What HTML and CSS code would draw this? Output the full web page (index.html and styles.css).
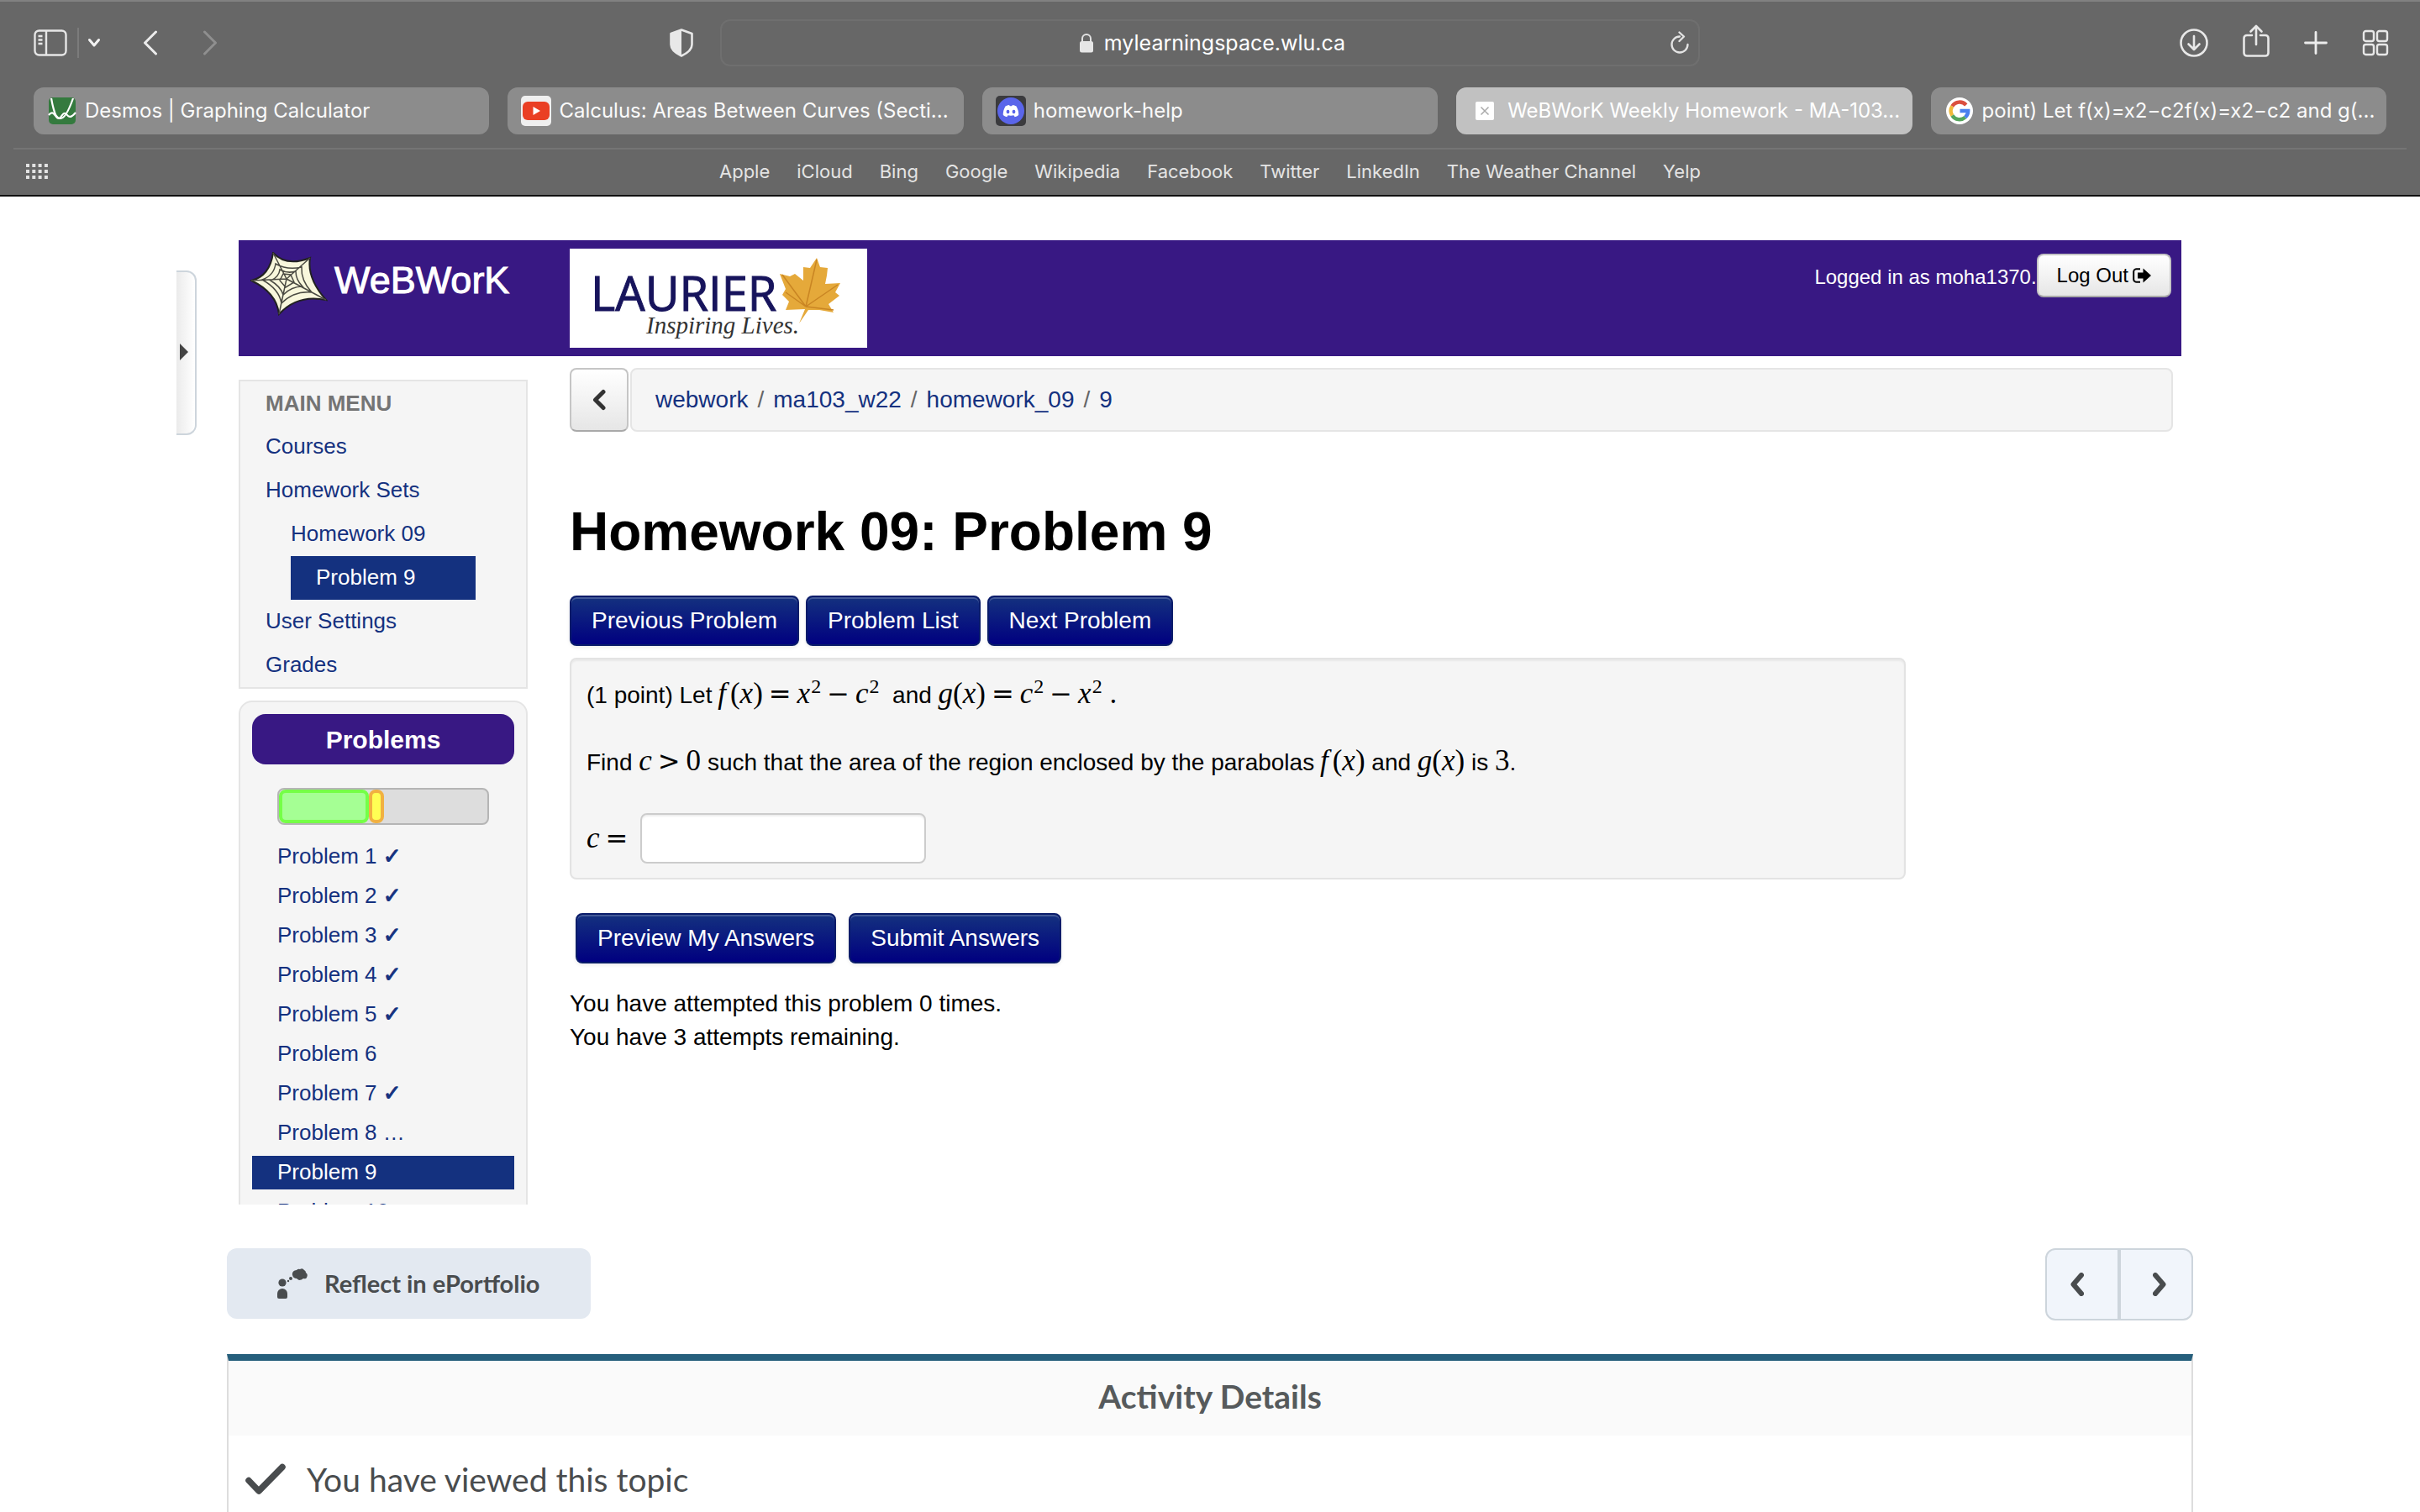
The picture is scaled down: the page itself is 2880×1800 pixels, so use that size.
FILE: index.html
```html
<!DOCTYPE html>
<html lang="en">
<head>
<meta charset="utf-8">
<title>WeBWorK Weekly Homework - MA-103</title>
<link rel="stylesheet" href="styles.css">
</head>
<body>
<header class="browser">
  <div class="toolbar">
    <div class="tools tools-left">
      <button class="tool" aria-label="Sidebar"><svg width="40" height="32" viewBox="0 0 40 32" fill="none" stroke="#e6e6e6" stroke-width="2.4"><rect x="1.5" y="1.5" width="37" height="29" rx="5"/><path d="M15 2v28M5.500 8h5M5.500 12.500h5M5.500 17h5"/></svg></button>
      <span class="tool-divider"></span>
      <button class="tool tool-menu" aria-label="Tab groups"><svg width="16" height="12" viewBox="0 0 16 12" fill="none" stroke="#f2f2f2" stroke-width="3" stroke-linecap="round" stroke-linejoin="round"><path d="M2.500 2.500 8 9l5.500-6.500"/></svg></button>
      <button class="tool tool-back" aria-label="Back"><svg width="18" height="30" viewBox="0 0 18 30" fill="none" stroke="#ececec" stroke-width="3" stroke-linecap="round" stroke-linejoin="round"><path d="M15.500 2 2.500 15l13 13"/></svg></button>
      <button class="tool tool-forward" aria-label="Forward"><svg width="18" height="30" viewBox="0 0 18 30" fill="none" stroke="#8f8f8f" stroke-width="3" stroke-linecap="round" stroke-linejoin="round"><path d="M2.500 2l13 13-13 13"/></svg></button>
    </div>
    <button class="tool tool-shield" aria-label="Privacy report"><svg width="28" height="34" viewBox="0 0 28 34"><path d="M14 1.500 26.500 6v13c0 6-6 10.500-12.500 13.500C7.500 29.500 1.500 25 1.500 19V6z" fill="none" stroke="#e8e8e8" stroke-width="2.600" stroke-linejoin="round"/><path d="M14 2v30C7.500 29 2 25 2 19V6z" fill="#e8e8e8"/></svg></button>
    <div class="address">
      <svg width="16" height="24" viewBox="0 0 16 24"><path d="M3 12V7a5 5 0 0 1 10 0v5" fill="none" stroke="#e2e2e2" stroke-width="2"/><rect y="10" width="16" height="13.500" rx="2.500" fill="#e6e6e6"/></svg>
      <span>mylearningspace.wlu.ca</span>
      <button class="tool reload" aria-label="Reload"><svg width="24" height="28" viewBox="0 0 24 28" fill="none" stroke="#e4e4e4" stroke-width="2.300" stroke-linecap="round" stroke-linejoin="round"><path d="M12 6.500a9.500 9.500 0 1 0 9.500 9.500M11.500 1.500l5.500 5-5.500 5.500"/></svg></button>
    </div>
    <div class="tools tools-right">
      <button class="tool" aria-label="Downloads"><svg width="34" height="34" viewBox="0 0 34 34" fill="none" stroke="#e8e8e8" stroke-width="2.600" stroke-linecap="round" stroke-linejoin="round"><circle cx="17" cy="17" r="15.500"/><path d="M17 9v16M10.500 18.500 17 25l6.500-6.500"/></svg></button>
      <button class="tool tool-share" aria-label="Share"><svg width="32" height="40" viewBox="0 0 32 40" fill="none" stroke="#e8e8e8" stroke-width="2.600" stroke-linecap="round" stroke-linejoin="round"><path d="M11 13H5a3.500 3.500 0 0 0-3.500 3.500V34A3.500 3.500 0 0 0 5 37.500h22a3.500 3.500 0 0 0 3.500-3.500V16.500A3.500 3.500 0 0 0 27 13h-6M16 24V2M9.500 8.500 16 2l6.500 6.500"/></svg></button>
      <button class="tool" aria-label="New tab"><svg width="28" height="28" viewBox="0 0 28 28" stroke="#ececec" stroke-width="2.800" stroke-linecap="round"><path d="M14 1.500v25M1.500 14h25"/></svg></button>
      <button class="tool" aria-label="Tab overview"><svg width="32" height="32" viewBox="0 0 32 32" fill="none" stroke="#e8e8e8" stroke-width="2.400"><rect x="2" y="2" width="12" height="12" rx="2.500"/><rect x="18" y="2" width="12" height="12" rx="2.500"/><rect x="2" y="18" width="12" height="12" rx="2.500"/><rect x="18" y="18" width="12" height="12" rx="2.500"/></svg></button>
    </div>
  </div>
  <nav class="tabs" aria-label="Tabs">
    <a class="tab" href="#"><svg width="36" height="36" viewBox="0 0 36 36"><rect x="2" y="2" width="32" height="32" rx="5" fill="#347a3e"/><path d="M5 3c4 22 7 24 11 24S25 20 31 3M2 23c4-5 6-2 9 2s5 1 7-2 4-3 6 0 5 3 10-3" fill="none" stroke="#fff" stroke-width="2.200"/></svg><span>Desmos | Graphing Calculator</span></a>
    <a class="tab" href="#"><svg width="36" height="36" viewBox="0 0 36 36"><rect width="36" height="36" rx="5" fill="#efefef"/><rect x="2" y="7" width="32" height="22" rx="6" fill="#ea3f24"/><path d="M14.500 13v10l8.500-5z" fill="#fff"/></svg><span>Calculus: Areas Between Curves (Secti...</span></a>
    <a class="tab" href="#"><svg width="36" height="36" viewBox="0 0 36 36"><rect width="36" height="36" rx="5" fill="#3b3b3e"/><circle cx="18" cy="18" r="16" fill="#5a65ea"/><path d="M11.500 12.500c1.500-1 3-1.500 4.500-1.500l.8 1.300h2.400L20 11c1.500 0 3 .5 4.500 1.500 2 3.500 3 7 2.700 10.500-1.500 1.200-3 2-4.500 2.300l-1.200-2c-2.300.6-4.700.6-7 0l-1.200 2C11.800 25 10.300 24.200 8.800 23c-.3-3.500.7-7 2.700-10.500z" fill="#fff"/><ellipse cx="14.500" cy="19" rx="1.900" ry="2.200" fill="#5a65ea"/><ellipse cx="21.500" cy="19" rx="1.900" ry="2.200" fill="#5a65ea"/></svg><span>homework-help</span></a>
    <a class="tab tab-active" href="#"><svg width="36" height="36" viewBox="0 0 36 36"><rect x="7" y="7" width="22" height="22" rx="2" fill="#fff"/><path d="M13.500 13.500l9 9M22.500 13.500l-9 9" stroke="#aaa" stroke-width="1.500"/></svg><span>WeBWorK Weekly Homework - MA-103...</span></a>
    <a class="tab" href="#"><svg width="36" height="36" viewBox="0 0 36 36"><circle cx="18" cy="18" r="16" fill="#fff"/><g fill="none" stroke-width="4.400"><path d="M25.800 11A10.300 10.300 0 0 0 9.300 12.500" stroke="#db4f3f"/><path d="M9.300 12.500a10.300 10.300 0 0 0 0 11" stroke="#f0b93a"/><path d="M9.300 23.500a10.300 10.300 0 0 0 15.500 2.200" stroke="#55a55c"/><path d="M24.800 25.700A10.300 10.300 0 0 0 28.200 18H18.500" stroke="#4a80ee"/></g></svg><span>point) Let f(x)=x2−c2f(x)=x2−c2 and g(...</span></a>
  </nav>
  <nav class="bookmarks" aria-label="Favourites">
    <svg class="dots" width="26" height="18" viewBox="0 0 26 18" stroke="#e2e2e2" stroke-width="4" stroke-dasharray="4 3.300"><path d="M0 2h26M0 9h26M0 16h26"/></svg>
    <a href="#">Apple</a><a href="#">iCloud</a><a href="#">Bing</a><a href="#">Google</a><a href="#">Wikipedia</a><a href="#">Facebook</a><a href="#">Twitter</a><a href="#">LinkedIn</a><a href="#">The Weather Channel</a><a href="#">Yelp</a>
  </nav>
</header>

<button class="drawer-handle" aria-label="Show table of contents"><svg width="10" height="20" viewBox="0 0 10 20"><path d="M0 0l10 10L0 20z" fill="#444"/></svg></button>

<main class="page">
  <div class="frame">
    <header class="banner">
      <div class="brand">
        <svg width="92" height="76" viewBox="0 0 92 76"><path d="M27 1q16 17 44 6-4 24 19 50-34-7-56 17Q31 48 1 34 23 29 27 1z" fill="#f8f7dc" stroke="#222" stroke-width="2"/><g fill="none" stroke="#4a4a42" stroke-width="1.500"><path d="M43 32 27 1M43 32 71 7M43 32l47 25M43 32l-9 42M43 32 1 34M30 14q14 8 31 4-1 16 12 30-21-2-36 13-3-17-23-28 14-5 16-19zM35 21q9 5 19 2 0 10 8 18-13 0-23 10-3-10-15-17 10-4 11-13zM39 26l9 1 4 9-10 6-7-8z"/></g></svg>
        <span>WeBWorK</span>
      </div>
      <svg class="laurier" width="354" height="118" viewBox="0 0 354 118" role="img" aria-label="Laurier Inspiring Lives">
        <rect width="354" height="118" fill="#fff"/>
        <text class="laurier-name" x="25" y="74">LAURIER</text>
        <text class="laurier-motto" x="91" y="101">Inspiring Lives.</text>
        <path d="M294 11l4 11 9 1-1 9-2 10 18-1-6 11 5 4-13 10 6 10-17-3-13 0-11 16 7-17-23 1 4-10-8-8 4-7-7-18 12 3 6-3 10 8 0-16 8 1z" fill="#e5a93a"/>
        <path d="M281 69l13-56M281 69l38-26M281 69l-28-38M281 69l33 4M281 69l-24-17" fill="none" stroke="#c98523" stroke-width="1.500"/>
      </svg>
      <div class="login">
        <span>Logged in as moha1370.</span>
        <button class="btn-light">Log Out <svg width="22" height="18" viewBox="0 0 22 18"><path d="M9 1.200H4.500a3.300 3.300 0 0 0-3.300 3.300v9a3.300 3.300 0 0 0 3.300 3.300H9" fill="none" stroke="#000" stroke-width="2"/><path d="M6 5.500h6.500V.5L22 9l-9.500 8.500v-5H6z"/></svg></button>
      </div>
    </header>

    <div class="columns">
      <aside class="side">
        <nav class="menu" aria-label="Main menu">
          <h2>MAIN MENU</h2>
          <a href="#">Courses</a>
          <a href="#">Homework Sets</a>
          <a class="level-2" href="#">Homework 09</a>
          <a class="level-3" href="#">Problem 9</a>
          <a href="#">User Settings</a>
          <a href="#">Grades</a>
        </nav>
        <section class="problems">
          <h2>Problems</h2>
          <div class="progress"><span class="done" style="width:43%"></span><span class="partial"></span></div>
          <ul>
            <li><a href="#">Problem 1 <i class="tick"></i></a></li>
            <li><a href="#">Problem 2 <i class="tick"></i></a></li>
            <li><a href="#">Problem 3 <i class="tick"></i></a></li>
            <li><a href="#">Problem 4 <i class="tick"></i></a></li>
            <li><a href="#">Problem 5 <i class="tick"></i></a></li>
            <li><a href="#">Problem 6</a></li>
            <li><a href="#">Problem 7 <i class="tick"></i></a></li>
            <li><a href="#">Problem 8 …</a></li>
            <li><a class="current" href="#">Problem 9</a></li>
            <li><a href="#">Problem 10</a></li>
          </ul>
        </section>
      </aside>

      <div class="content">
        <nav class="crumbs" aria-label="Breadcrumb">
          <button class="btn-light crumb-back" aria-label="Up"><svg width="18" height="26" viewBox="0 0 18 26" fill="none" stroke="#333" stroke-width="5" stroke-linecap="round" stroke-linejoin="round"><path d="M14 3.500 4.500 13l9.500 9.500"/></svg></button>
          <div class="crumb-bar"><a href="#">webwork</a><span>/</span><a href="#">ma103_w22</a><span>/</span><a href="#">homework_09</a><span>/</span><a href="#">9</a></div>
        </nav>
        <h1>Homework 09: Problem 9</h1>
        <div class="row">
          <button class="btn">Previous Problem</button>
          <button class="btn">Problem List</button>
          <button class="btn">Next Problem</button>
        </div>
        <form class="answer" id="answer">
          <p>(1 point) Let <span class="math"><i class="f">f</i>(<i>x</i>)<b>=</b><i>x</i><sup>2</sup><b>−</b><i>c</i><sup>2</sup></span>&nbsp; and <span class="math"><i>g</i>(<i>x</i>)<b>=</b><i>c</i><sup>2</sup><b>−</b><i>x</i><sup>2</sup> .</span></p>
          <p>Find <span class="math"><i>c</i><b>&gt;</b>0</span> such that the area of the region enclosed by the parabolas <span class="math"><i class="f">f</i>(<i>x</i>)</span> and <span class="math"><i>g</i>(<i>x</i>)</span> is <span class="math">3</span>.</p>
          <div class="field"><label class="math" for="c"><i>c</i><b>=</b></label><input id="c" type="text"></div>
        </form>
        <div class="row row-submit">
          <button class="btn" form="answer">Preview My Answers</button>
          <button class="btn" form="answer">Submit Answers</button>
        </div>
        <p class="attempts">You have attempted this problem 0 times.<br>You have 3 attempts remaining.</p>
      </div>
    </div>
  </div>

  <div class="actions">
    <button class="reflect"><svg width="36" height="36" viewBox="0 0 36 36" fill="#494c4e"><circle cx="6" cy="17" r="4.600"/><path d="M0 34v-4a6 6 0 0 1 12 0v4q0 2-2 2H2q-2 0-2-2z"/><circle cx="13" cy="15" r="1.200"/><circle cx="16" cy="12" r="2"/><path d="M18 8q-1-5 5-6 2-2 4-1 3-2 5 1 2 1 2 3 3 2 1 6-1 2-4 1-2 2-5 2-2-1-3-2-4 0-5-4z"/></svg>Reflect in ePortfolio</button>
    <div class="pager">
      <button aria-label="Previous"><svg width="16" height="28" viewBox="0 0 16 28"><path d="M13 3 3.500 14 13 25"/></svg></button>
      <button aria-label="Next"><svg width="16" height="28" viewBox="0 0 16 28"><path d="M3 3l9.500 11L3 25"/></svg></button>
    </div>
  </div>

  <section class="activity">
    <h2>Activity Details</h2>
    <p><svg width="48" height="38" viewBox="0 0 48 38" fill="none" stroke="#494c4e" stroke-width="7.500" stroke-linecap="round" stroke-linejoin="round"><path d="M4 20.500 16 33 44 4.500"/></svg>You have viewed this topic</p>
  </section>
</main>
</body>
</html>
```
FILE: styles.css
```css
* { box-sizing: border-box; }

body {
  margin: 0;
  min-height: 100vh;
  display: flex;
  flex-direction: column;
  position: relative;
  background: #fff;
  color: #000;
  font: 28px/40px "Liberation Sans", Arial, sans-serif;
}

a { color: #14317f; text-decoration: none; }
button { font: inherit; cursor: pointer; }
h1, h2, p, ul { margin: 0; padding: 0; }
svg { display: block; flex: none; }

/* Browser chrome */
.browser {
  background: #676767;
  border-top: 2px solid #818181;
  border-bottom: 2px solid #111;
  height: 234px;
  font-family: Inter, sans-serif;
  color: #f4f4f4;
}
.toolbar {
  display: grid;
  grid-template-columns: 12fr auto minmax(0, 1166px) 13fr;
  align-items: center;
  height: 102px;
  padding: 0 37px 4px 40px;
}
.tools { display: flex; align-items: center; }
.tools-right { justify-content: flex-end; gap: 41px; }
.tool { padding: 0; border: 0; background: none; color: inherit; }
.tool-divider { width: 2px; height: 36px; margin: 0 10px 0 12px; background: #7b7b7b; }
.tool-back { margin-left: 50px; }
.tool-forward { margin-left: 53px; }
.tool-shield { margin-right: 32px; }
.tool-share { margin-top: -4px; }
.address {
  display: flex;
  align-items: center;
  justify-content: center;
  gap: 13px;
  position: relative;
  height: 56px;
  padding-left: 6px;
  border: 2px solid #6f6f6f;
  border-radius: 12px;
  color: #fff;
  font-size: 25px;
}
.reload { position: absolute; right: 10px; }
.tabs {
  display: grid;
  grid-template-columns: repeat(5, minmax(0, 1fr));
  gap: 22px;
  padding: 0 40px;
}
.tab {
  display: flex;
  align-items: center;
  gap: 9px;
  height: 56px;
  padding: 0 16px;
  border-radius: 12px;
  background: #8c8c8c;
  color: #fafafa;
  font-size: 24px;
  white-space: nowrap;
  overflow: hidden;
}
.tab-active { background: #c1c1c1; color: #fff; }
.bookmarks {
  display: flex;
  align-items: center;
  justify-content: center;
  gap: 32px;
  position: relative;
  height: 54px;
  margin: 16px 16px 0;
  border-top: 2px solid #757575;
  font-size: 22px;
}
.bookmarks a { color: #e4e4e4; }
.dots { position: absolute; left: 15px; }

.drawer-handle {
  position: absolute;
  left: 210px;
  top: 322px;
  width: 24px;
  height: 196px;
  padding: 0 4px 2px;
  border: 2px solid #cdd5dc;
  border-left: 0;
  border-radius: 0 12px 12px 0;
  background: linear-gradient(90deg, #ebebeb, #fff);
}

/* Embedded course frame */
.page {
  flex: 1;
  display: flex;
  flex-direction: column;
  padding: 52px 270px 0;
}
.frame { height: 1148px; padding: 0 14px; overflow: hidden; }
.banner {
  display: grid;
  grid-template-columns: 394px auto 1fr;
  height: 138px;
  padding: 10px 12px 10px 0;
  background: #381883;
  color: #fff;
}
.brand {
  display: flex;
  gap: 8px;
  padding: 4px 0 0 14px;
  font-size: 45px;
  line-height: 68px;
  -webkit-text-stroke: 1px #fff;
}
.laurier-name { font: 56px "Open Sans", sans-serif; fill: #17145c; stroke: #17145c; stroke-width: 1px; }
.laurier-motto { font: italic 29px "Liberation Serif", serif; fill: #333; }
.login {
  display: flex;
  justify-content: flex-end;
  padding-top: 6px;
  font-size: 24px;
  line-height: 56px;
}
.btn-light {
  display: flex;
  align-items: center;
  justify-content: center;
  gap: 5px;
  height: 52px;
  padding: 0 22px;
  border: 2px solid #c5c5c5;
  border-bottom-color: #a9a9a9;
  border-radius: 8px;
  background: linear-gradient(#fff, #e6e6e6);
  color: #000;
}

.columns {
  display: grid;
  grid-template-columns: 344px minmax(0, 1fr);
  column-gap: 50px;
}
.side { padding-top: 28px; font-size: 26px; }
.menu { border: 2px solid #e5e5e5; background: #f5f5f5; }
.menu h2 {
  padding: 2px 0 2px 30px;
  font-size: 26px;
  line-height: 48px;
  color: #747474;
}
.menu a { display: block; padding: 0 0 2px 30px; line-height: 50px; }
.menu .level-2 { padding-left: 60px; }
.menu .level-3 { width: 220px; margin-left: 60px; background: #14317f; color: #fff; }
.problems {
  margin-top: 14px;
  height: 640px;
  padding: 14px;
  border: 2px solid #e5e5e5;
  border-radius: 16px;
  background: #f5f5f5;
}
.problems h2 {
  border-radius: 16px;
  background: #381883;
  color: #fff;
  font-size: 30px;
  line-height: 62px;
  height: 60px;
  text-align: center;
}
.progress {
  display: flex;
  height: 44px;
  margin: 28px 30px 18px;
  border: 2px solid #b5b5b5;
  border-radius: 8px;
  background: #ddd;
}
.done { border: 4px solid #75ff47; border-radius: 8px; background: #a5ff94; }
.partial { width: 18px; border: 4px solid #f1b141; border-radius: 8px; background: #ffff54; }
.problems ul { display: grid; gap: 7px; list-style: none; }
.problems li a { display: block; height: 40px; padding-left: 30px; line-height: 38px; }
.problems .current { background: #14317f; color: #fff; }
.tick::before {
  content: "✓";
  font: 26px/32px "DejaVu Sans", sans-serif;
  -webkit-text-stroke: 1px #14317f;
}

.content { padding: 14px 10px 0 0; }
.crumbs { display: flex; gap: 2px; }
.crumb-back { width: 70px; height: 76px; }
.crumb-bar {
  flex: 1;
  display: flex;
  gap: 11px;
  height: 76px;
  padding: 0 28px;
  border: 2px solid #e5e5e5;
  border-radius: 8px;
  background: #f5f5f5;
  line-height: 72px;
}
.crumb-bar span { color: #666; }
h1 { margin: 83px 0 40px; font-size: 64px; line-height: 72px; }
.row { display: flex; gap: 8px; }
.btn {
  height: 60px;
  padding: 0 24px;
  border: 2px solid #0a1c6a;
  border-radius: 8px;
  background: linear-gradient(#14317f, #000080);
  box-shadow: inset 0 2px 0 rgba(255, 255, 255, 0.2), 0 2px 4px rgba(0, 0, 0, 0.08);
  color: #fff;
}
.answer {
  width: 83.3333%;
  margin-top: 14px;
  padding: 23px 18px 17px;
  border: 2px solid #e3e3e3;
  border-radius: 8px;
  background: #f5f5f5;
  box-shadow: inset 0 2px 2px rgba(0, 0, 0, 0.05);
}
.answer p { height: 40px; margin-bottom: 40px; }
.math { font: 35px/24px "Liberation Serif", "Times New Roman", serif; }
.math b { margin: 0 7px; font: 32px/20px "DejaVu Sans", sans-serif; }
.math sup { margin-left: 1px; font-size: 24px; line-height: 0; vertical-align: 12px; }
.math .f { margin: 0 5px 0 -1px; }
.field { display: flex; align-items: center; gap: 8px; }
.field input {
  width: 340px;
  height: 60px;
  padding: 0 12px;
  border: 2px solid #ccc;
  border-radius: 8px;
  background: #fff;
  box-shadow: inset 0 2px 2px rgba(0, 0, 0, 0.07);
  font: inherit;
}
.row-submit { gap: 15px; margin: 40px 0 0 7px; }
.attempts { margin-top: 28px; }

/* Course tools below the frame */
.actions {
  display: flex;
  justify-content: space-between;
  align-items: flex-start;
  margin: 52px 0 40px;
  font-family: Lato, sans-serif;
}
.reflect {
  display: flex;
  align-items: center;
  gap: 20px;
  height: 84px;
  padding: 0 60px;
  border: 0;
  border-radius: 12px;
  background: #e3e9f1;
  color: #494c4e;
  font-size: 29px;
  font-weight: 700;
}
.pager { display: flex; }
.pager button {
  display: grid;
  place-items: center;
  width: 88px;
  height: 86px;
  padding: 0 12px 0 0;
  border: 2px solid #cdd5dc;
  background: #f1f5fb;
}
.pager button:first-child { border-radius: 12px 0 0 12px; }
.pager button:last-child { padding: 0 0 0 8px; border-radius: 0 12px 12px 0; }
.pager path {
  fill: none;
  stroke: #494c4e;
  stroke-width: 6;
  stroke-linecap: round;
  stroke-linejoin: round;
}
.activity {
  flex: 1;
  border: 2px solid #ddd;
  border-top: 8px solid #265f7c;
  border-bottom: 0;
  color: #494c4e;
  font-family: Lato, sans-serif;
}
.activity h2 {
  padding-bottom: 4px;
  background: #fafafa;
  color: #565a5c;
  font-size: 39px;
  line-height: 85px;
  text-align: center;
}
.activity p {
  display: flex;
  align-items: center;
  gap: 25px;
  padding: 28px 20px;
  font-size: 39px;
  line-height: 48px;
}
```
